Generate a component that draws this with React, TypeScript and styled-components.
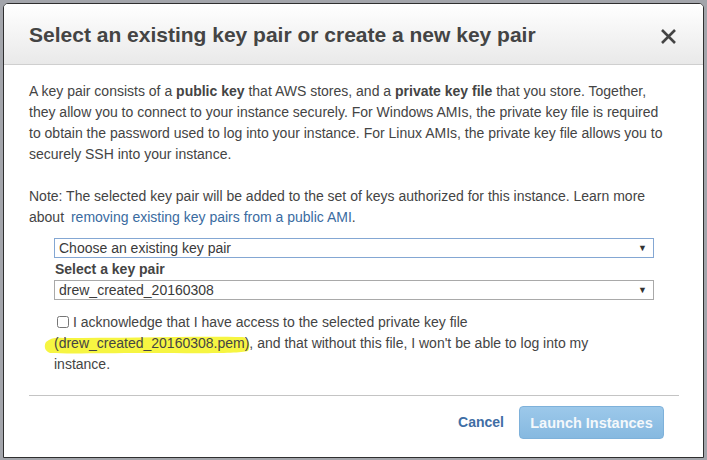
import React from "react";
import styled, { createGlobalStyle } from "styled-components";

const Global = createGlobalStyle`
  html, body { margin: 0; padding: 0; }
  body {
    background: #a3a5ab;
    font-family: "Liberation Sans", Arial, sans-serif;
    width: 707px;
    height: 460px;
    overflow: hidden;
  }
`;

const Page = styled.div`
  padding: 3px 0 0 3px;
`;

const Modal = styled.div`
  width: 699px;
  height: 453px;
  border: 1px solid #2f2f2f;
  border-radius: 5px 5px 0 0;
  background: #fff;
  display: flex;
  flex-direction: column;
  overflow: hidden;
`;

const Header = styled.div`
  height: 60px;
  flex: none;
  display: flex;
  align-items: center;
  justify-content: space-between;
  padding: 0 25px 0 25px;
  background: linear-gradient(#ffffff, #e9e9e9);
  border-bottom: 1px solid #cfcfcf;
`;

const Title = styled.h1`
  margin: 0;
  font-size: 21px;
  font-weight: bold;
  color: #444;
  padding-top: 2px;
`;

const Close = styled.button`
  border: none;
  background: none;
  padding: 0;
  width: 20px;
  height: 20px;
  display: flex;
  align-items: center;
  justify-content: center;
  cursor: pointer;
  margin-top: 4px;
`;

const Body = styled.div`
  padding: 16px 24px 0 25px;
  font-size: 14px;
  line-height: 21px;
  color: #444;
`;

const Para = styled.p<{ $gap?: number }>`
  margin: 0 0 ${(p) => p.$gap ?? 0}px;
  white-space: nowrap;
`;

const Link = styled.a`
  color: #3a6b9f;
  text-decoration: none;
  margin-left: 3px;
`;

const Field = styled.div`
  margin-left: 25px;
  width: 600px;
`;

const Select = styled.div<{ $focus?: boolean }>`
  height: 18px;
  border: 1px solid ${(p) => (p.$focus ? "#84a7d3" : "#a9a9a9")};
  display: flex;
  align-items: center;
  justify-content: space-between;
  padding: 0 6px 0 4px;
  font-size: 14px;
  color: #3a3a3a;
  background: #fff;
`;

const Arrow = styled.span`
  font-size: 9px;
  color: #333;
`;

const Label = styled.div`
  font-weight: bold;
  color: #444;
  font-size: 14px;
  line-height: 22px;
  padding-left: 1px;
`;

const Ack = styled.div`
  margin: 12px 0 0 25px;
  width: 600px;
  white-space: nowrap;
`;

const Check = styled.input`
  width: 12px;
  height: 12px;
  margin: 0 4px 0 3px;
  vertical-align: -1px;
`;

const Mark = styled.span`
  position: relative;
  z-index: 0;
`;

const MarkSvg = styled.svg`
  position: absolute;
  left: -10px;
  top: -3px;
  z-index: -1;
`;

const Divider = styled.hr`
  border: none;
  border-top: 1px solid #c4c4c4;
  margin: 20px 0 0;
`;

const Footer = styled.div`
  display: flex;
  justify-content: flex-end;
  align-items: center;
  gap: 15px;
  padding: 10px 15px 0 0;
`;

const Cancel = styled.a`
  color: #3f6ea5;
  font-weight: bold;
  font-size: 14px;
  text-decoration: none;
`;

const Launch = styled.button`
  height: 33px;
  width: 145px;
  border: 1px solid #7eb1da;
  border-radius: 4px;
  background: linear-gradient(#9cc8ea, #86b9e0);
  color: #f4f8fb;
  font-family: "Liberation Sans", Arial, sans-serif;
  font-weight: bold;
  font-size: 14.5px;
`;

export default function App() {
  return (
    <>
      <Global />
      <Page>
        <Modal>
          <Header>
            <Title>Select an existing key pair or create a new key pair</Title>
            <Close aria-label="Close">
              <svg width="17" height="17" viewBox="0 0 17 17">
                <path d="M2 2 L15 15 M15 2 L2 15" stroke="#444" strokeWidth="2.6" />
              </svg>
            </Close>
          </Header>
          <Body>
            <Para $gap={21}>
              A key pair consists of a <b>public key</b> that AWS stores, and a <b>private key file</b> that you store. Together,
              <br />
              they allow you to connect to your instance securely. For Windows AMIs, the private key file is required
              <br />
              to obtain the password used to log into your instance. For Linux AMIs, the private key file allows you to
              <br />
              securely SSH into your instance.
            </Para>
            <Para $gap={10}>
              Note: The selected key pair will be added to the set of keys authorized for this instance. Learn more
              <br />
              about <Link href="#">removing existing key pairs from a public AMI</Link>.
            </Para>
            <Field>
              <Select $focus>
                <span>Choose an existing key pair</span>
                <Arrow>▼</Arrow>
              </Select>
              <Label>Select a key pair</Label>
              <Select>
                <span>drew_created_20160308</span>
                <Arrow>▼</Arrow>
              </Select>
            </Field>
            <Ack>
              <Check type="checkbox" />I acknowledge that I have access to the selected private key file
              <br />
              <Mark>
                <MarkSvg width="207" height="24" viewBox="0 0 207 24">
                  <path
                    d="M2 10 C6 6 12 5 20 6 C80 6 150 4 199 5 C205 6 207 14 204 19 C194 22 150 21 100 21 C60 21 25 22 6 21 C0 19 0 13 2 10 Z"
                    fill="#f6f542"
                  />
                </MarkSvg>
                (drew_created_20160308.pem)
              </Mark>
              {", and that without this file, I won't be able to log into my"}
              <br />
              instance.
            </Ack>
            <Divider />
            <Footer>
              <Cancel href="#">Cancel</Cancel>
              <Launch>Launch Instances</Launch>
            </Footer>
          </Body>
        </Modal>
      </Page>
    </>
  );
}
